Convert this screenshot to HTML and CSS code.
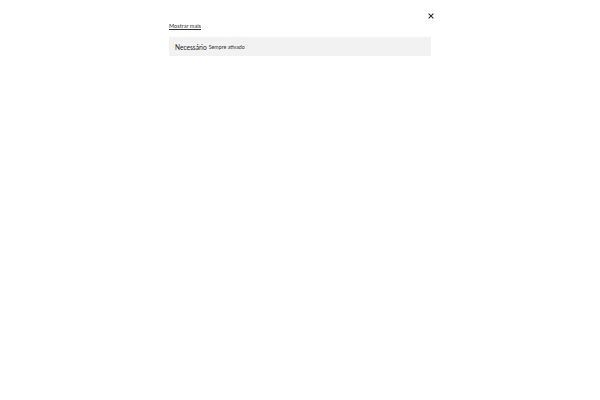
FILE: index.html
```html
<!DOCTYPE html>
<html lang="pt">
<head>
  <meta charset="UTF-8" />
  <meta name="viewport" content="width=device-width, initial-scale=1.0" />
  <title>Preferências de cookies</title>
  <link rel="stylesheet" href="styles.css">
</head>
<body>
  <div class="panel">
    <div class="panel-top">
      <button class="close-btn" aria-label="Fechar">
        <svg width="6" height="6" viewBox="0 0 10 10">
          <path d="M1 1 L9 9 M9 1 L1 9" stroke="#222" stroke-width="1.7" />
        </svg>
      </button>
    </div>
    <a href="#" class="show-more">Mostrar mais</a>
    <div class="category">
      <span class="cat-name">Necessário</span>
      <span class="cat-state">Sempre ativado</span>
    </div>
  </div>
</body>
</html>
```

FILE: styles.css
```css
* {
  margin: 0; padding: 0;
  box-sizing: border-box;
  font-family: Lato, 'Open Sans', sans-serif;
}

body {
  background: #fff;
  color: #333;
}

.panel {
  width: 262px;
  margin: 0 auto;
  padding-top: 11px;
}

.panel-top {
  display: flex;
  justify-content: flex-end;
  height: 10px;
  margin-right: -5px;
}

.close-btn {
  background: none;
  border: none;
  width: 10px;
  height: 10px;
  display: flex;
  align-items: center;
  justify-content: center;
  cursor: pointer;
}

.show-more {
  display: block;
  width: max-content;
  margin-top: 1px;
  font-size: 5.6px;
  color: #333;
  text-decoration: underline;
}

.category {
  margin-top: 8px;
  background: #f2f2f2;
  height: 19px;
  padding: 0 6px;
  display: flex;
  align-items: center;
  gap: 2px;
}

.cat-name {
  font-size: 6.6px;
  color: #222;
}

.cat-state {
  font-size: 5.3px;
  color: #333;
}
```
